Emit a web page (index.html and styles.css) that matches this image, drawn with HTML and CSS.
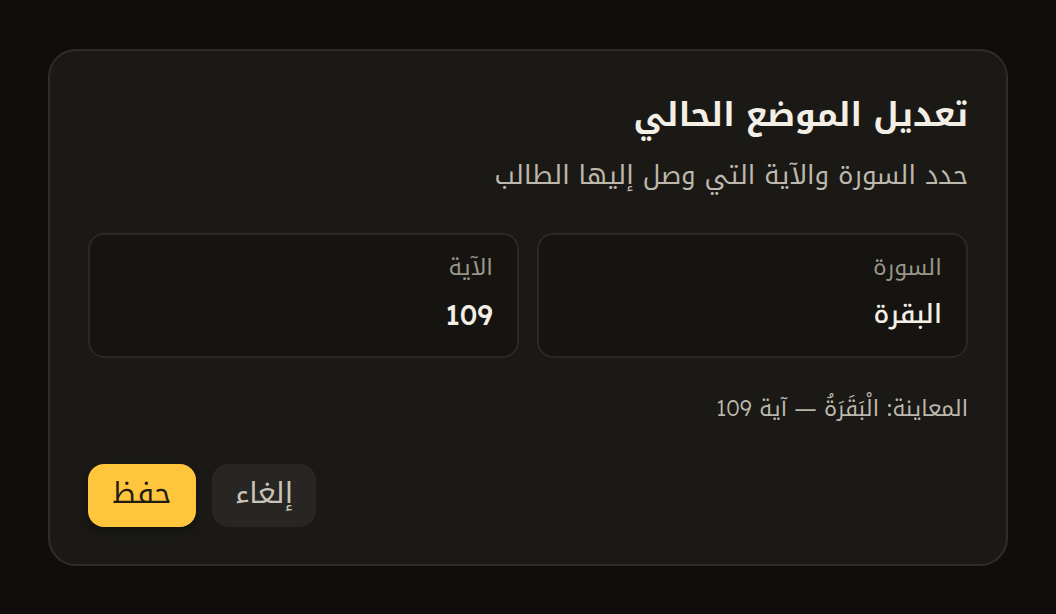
FILE: index.html
```html
<!DOCTYPE html>
<html lang="ar" dir="rtl">
<head>
<meta charset="utf-8">
<title>تعديل الموضع الحالي</title>
<link rel="stylesheet" href="styles.css">
</head>
<body>
<div class="card">
  <h1 class="title">تعديل الموضع الحالي</h1>
  <p class="subtitle">حدد السورة والآية التي وصل إليها الطالب</p>
  <div class="fields">
    <div class="field">
      <div class="label">السورة</div>
      <div class="value">البقرة</div>
    </div>
    <div class="field">
      <div class="label">الآية</div>
      <div class="value"><span class="num">109</span></div>
    </div>
  </div>
  <p class="preview">المعاينة: الْبَقَرَةُ — آية <span class="num">109</span></p>
  <div class="actions">
    <button class="btn btn-cancel">إلغاء</button>
    <button class="btn btn-save">حفظ</button>
  </div>
</div>
</body>
</html>
```
FILE: styles.css
```css
* { box-sizing: border-box; }
html, body { margin: 0; padding: 0; }
body {
  min-height: 100vh;
  background: #0f0e0d;
  display: flex;
  align-items: center;
  justify-content: center;
  font-family: "Noto Kufi Arabic", "Noto Sans Arabic", "Noto Sans", sans-serif;
  font-weight: 400;
}
.num {
  font-family: "Readex Pro", "Noto Sans", sans-serif;
}
.card {
  width: 960px;
  height: 517px;
  background: #1a1915;
  border: 2px solid #2e2d29;
  border-radius: 28px;
  padding: 42px 38px 38px;
  display: flex;
  flex-direction: column;
}
.title {
  margin: 0;
  font-size: 33px;
  font-weight: 700;
  color: #f3efe6;
  line-height: 44px;
}
.subtitle {
  margin: 21px 0 0;
  font-size: 26px;
  font-weight: 400;
  color: #bdb7ac;
  line-height: 36px;
}
.fields {
  margin-top: 39px;
  display: flex;
  gap: 18px;
}
.field {
  flex: 1;
  height: 125px;
  background: #151410;
  border: 2px solid #2a2925;
  border-radius: 16px;
  padding: 18px 24px;
  display: flex;
  flex-direction: column;
  gap: 13px;
}
.label {
  font-size: 23px;
  font-weight: 400;
  color: #9a958b;
  line-height: 30px;
}
.value {
  font-size: 26px;
  font-weight: 500;
  color: #f3efe6;
  line-height: 38px;
}
.value .num {
  font-size: 28px;
  font-weight: 500;
}
.preview {
  margin: 35px 0 0;
  font-size: 22px;
  font-weight: 400;
  color: #bcb7ad;
  line-height: 30px;
}
.preview .num {
  font-size: 22px;
  font-weight: 300;
}
.actions {
  margin-top: 40px;
  display: flex;
  gap: 16px;
  justify-content: flex-end;
}
.btn {
  height: 63px;
  border: none;
  border-radius: 16px;
  font-family: inherit;
  font-size: 29px;
  font-weight: 400;
  padding: 0 0 4px;
  line-height: 1;
  cursor: pointer;
}
.btn-save {
  width: 108px;
  background: #ffc53d;
  color: #1f1c15;
  box-shadow: 0 4px 10px rgba(0,0,0,0.35);
}
.btn-cancel {
  width: 104px;
  background: #272623;
  color: #c8c3b8;
}
```
